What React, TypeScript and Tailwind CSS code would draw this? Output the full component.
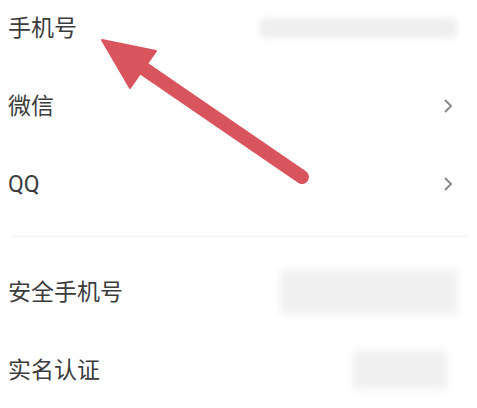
const font = { fontFamily: 'Roboto, "Noto Sans CJK SC", "Noto Sans", sans-serif' };

function Chevron() {
  return (
    <svg width="10" height="16" viewBox="0 0 10 16" className="mr-[24px]">
      <path d="M2 2l6 6-6 6" fill="none" stroke="#8a8a8a" strokeWidth="2" />
    </svg>
  );
}

function Row({ label, right }: { label: string; right?: React.ReactNode }) {
  return (
    <div className="flex h-[78px] items-center justify-between pl-[8px]">
      <span className="text-[23px] font-normal leading-none text-[#3c3c3c]">{label}</span>
      {right}
    </div>
  );
}

export default function App() {
  return (
    <div className="relative h-[408px] w-[477px] overflow-hidden bg-white" style={font}>
      <div className="-mt-[11px]">
        <Row
          label="手机号"
          right={<div className="mr-[20px] h-[20px] w-[197px] rounded-sm bg-[#efefef] blur-[3px]" />}
        />
        <Row label="微信" right={<Chevron />} />
        <Row label="QQ" right={<Chevron />} />
        <div className="mx-[10px] mt-[12px] h-[3px] bg-[#f9f9f9]" />
        <div className="mt-[15px]">
          <Row
            label="安全手机号"
            right={<div className="mr-[20px] h-[44px] w-[177px] bg-[#f0f0f0] blur-[4px]" />}
          />
          <Row
            label="实名认证"
            right={<div className="mr-[30px] h-[38px] w-[94px] bg-[#f0f0f0] blur-[4px]" />}
          />
        </div>
      </div>
      <svg className="absolute left-0 top-0" width="477" height="408" viewBox="0 0 477 408">
        <line x1="302" y1="177" x2="140" y2="66" stroke="#d9555e" strokeWidth="14" strokeLinecap="round" />
        <polygon points="102,40 156,51 130,88" fill="#d9555e" strokeLinejoin="round" stroke="#d9555e" strokeWidth="2" />
      </svg>
    </div>
  );
}
